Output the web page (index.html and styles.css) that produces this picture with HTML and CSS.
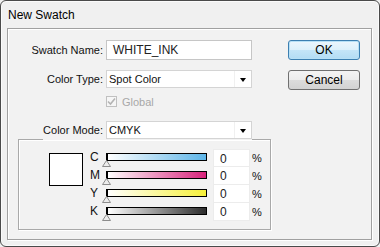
FILE: index.html
```html
<!DOCTYPE html>
<html lang="en">
<head>
    <meta charset="UTF-8">
    <title>New Swatch</title>
    <link rel="stylesheet" href="styles.css">
</head>
<body>
    <div class="window">
        <div class="titlebar">New Swatch</div>
        <div class="panel">
            <div class="form">
                <div class="row name-row">
                    <span class="label">Swatch Name:</span>
                    <div class="textbox">WHITE_INK</div>
                </div>
                <div class="row type-row">
                    <span class="label">Color Type:</span>
                    <div class="select">
                        <span class="select-text">Spot Color</span>
                        <span class="select-arrow"></span>
                    </div>
                </div>
                <div class="row check-row">
                    <span class="checkbox">
                        <svg width="9" height="9" viewBox="0 0 9 9"><path d="M1 4.5 L3.5 7 L8 1.5" fill="none" stroke="#b4b4b4" stroke-width="1.6"/></svg>
                    </span>
                    <span class="check-label">Global</span>
                </div>

                <div class="group">
                    <div class="group-title">
                        <span class="group-label">Color Mode:</span>
                        <div class="select">
                            <span class="select-text">CMYK</span>
                            <span class="select-arrow"></span>
                        </div>
                    </div>
                    <div class="group-body">
                        <div class="preview"></div>
                        <div class="sliders">
                            <div class="slider-row">
                                <span class="channel">C</span>
                                <div class="track">
                                    <div class="bar bar-c"></div>
                                    <svg class="thumb" width="9" height="7" viewBox="0 0 9 7"><path d="M4.5 0.5 L8.5 6.5 L0.5 6.5 Z" fill="#ececec" stroke="#8c8c8c"/></svg>
                                </div>
                                <div class="value">0</div>
                                <span class="pct">%</span>
                            </div>
                            <div class="slider-row">
                                <span class="channel">M</span>
                                <div class="track">
                                    <div class="bar bar-m"></div>
                                    <svg class="thumb" width="9" height="7" viewBox="0 0 9 7"><path d="M4.5 0.5 L8.5 6.5 L0.5 6.5 Z" fill="#ececec" stroke="#8c8c8c"/></svg>
                                </div>
                                <div class="value">0</div>
                                <span class="pct">%</span>
                            </div>
                            <div class="slider-row">
                                <span class="channel">Y</span>
                                <div class="track">
                                    <div class="bar bar-y"></div>
                                    <svg class="thumb" width="9" height="7" viewBox="0 0 9 7"><path d="M4.5 0.5 L8.5 6.5 L0.5 6.5 Z" fill="#ececec" stroke="#8c8c8c"/></svg>
                                </div>
                                <div class="value">0</div>
                                <span class="pct">%</span>
                            </div>
                            <div class="slider-row">
                                <span class="channel">K</span>
                                <div class="track">
                                    <div class="bar bar-k"></div>
                                    <svg class="thumb" width="9" height="7" viewBox="0 0 9 7"><path d="M4.5 0.5 L8.5 6.5 L0.5 6.5 Z" fill="#ececec" stroke="#8c8c8c"/></svg>
                                </div>
                                <div class="value">0</div>
                                <span class="pct">%</span>
                            </div>
                        </div>
                    </div>
                </div>
            </div>

            <div class="buttons">
                <div class="btn btn-default">OK</div>
                <div class="btn">Cancel</div>
            </div>
        </div>
    </div>
</body>
</html>
```

FILE: styles.css
```css
body {
    margin: 0;
    background: #f0f0f0;
    font-family: 'Liberation Sans', Arial, sans-serif;
    font-size: 11px;
    color: #111;
}

.window {
    width: 380px;
    height: 247px;
    box-sizing: border-box;
    border: 1px solid #4a4a4a;
    border-radius: 6px;
    background: #f0f0f0;
    box-shadow: inset 0 0 0 1px #fbfbfb;
    overflow: hidden;
}

.titlebar {
    height: 27px;
    line-height: 28px;
    padding-left: 7px;
    font-size: 12px;
    color: #000;
}

.panel {
    display: flex;
    height: 212px;
    box-sizing: border-box;
    margin: 0 7px 0 6px;
    border: 1px solid #a0a0a0;
    box-shadow: 1px 1px 0 #fff, inset 1px 1px 0 #fff;
    background: #f2f2f2;
}

.form {
    width: 264px;
}

.row {
    display: flex;
    align-items: center;
}

.label {
    width: 95px;
    margin-right: 3px;
    text-align: right;
}

.name-row {
    margin-top: 11px;
    height: 20px;
}

.textbox {
    width: 146px;
    height: 20px;
    box-sizing: border-box;
    border: 1px solid #c6c6c6;
    background: #fff;
    padding-left: 6px;
    font-size: 12px;
    line-height: 18px;
    color: #222;
}

.type-row {
    margin-top: 10px;
    height: 18px;
}

.select {
    display: flex;
    align-items: center;
    width: 146px;
    height: 18px;
    box-sizing: border-box;
    border: 1px solid #d4d4d4;
    background: #fff;
}

.select-text {
    flex: 1;
    padding-left: 2px;
    font-size: 11px;
    color: #111;
}

.select-arrow {
    display: flex;
    align-items: center;
    justify-content: center;
    width: 16px;
    height: 16px;
    border-left: 1px solid #f0f0f0;
}

.select-arrow::after {
    content: "";
    margin-top: 2px;
    border-top: 4px solid #000;
    border-left: 3.5px solid transparent;
    border-right: 3.5px solid transparent;
}

.check-row {
    margin-top: 8px;
    padding-left: 98px;
    height: 11px;
}

.checkbox {
    display: flex;
    align-items: center;
    justify-content: center;
    width: 11px;
    height: 11px;
    box-sizing: border-box;
    border: 1px solid #c0c0c0;
    background: #f6f6f6;
}

.check-label {
    margin-left: 5px;
    font-size: 11px;
    color: #a8a8a8;
}

.group {
    margin: 32px 0 0 10px;
    width: 253px;
    height: 91px;
    box-sizing: border-box;
    border: 1px solid #a9a9a9;
    box-shadow: 1px 1px 0 #fff, inset 1px 1px 0 #fff;
}

.group-title {
    display: flex;
    align-items: center;
    width: fit-content;
    margin: -19px 0 0 24px;
    padding-bottom: 1px;
    background: #f2f2f2;
}

.group-label {
    width: 60px;
    margin-right: 3px;
    text-align: right;
}

.group-body {
    display: flex;
}

.preview {
    width: 34px;
    height: 33px;
    box-sizing: border-box;
    margin: 13px 0 0 30px;
    border: 1px solid #000;
    background: #fff;
}

.sliders {
    margin: 9px 0 0 7px;
}

.slider-row {
    display: flex;
    height: 18px;
}

.channel {
    width: 16px;
    line-height: 17px;
    font-size: 12px;
}

.track {
    width: 101px;
    padding-top: 4px;
}

.bar {
    height: 8px;
    box-sizing: border-box;
    border: 1px solid #000;
    border-left-width: 2px;
}

.bar-c { background: linear-gradient(to right, #fff, #5db5e8); }
.bar-m { background: linear-gradient(to right, #fff, #d8237b); }
.bar-y { background: linear-gradient(to right, #fff, #f6f03a); }
.bar-k { background: linear-gradient(to right, #fff, #2c2c2c); }

.thumb {
    display: block;
    margin: -1px 0 0 -4px;
}

.value {
    width: 37px;
    height: 18px;
    box-sizing: border-box;
    margin-left: 6px;
    border: 1px solid #ececec;
    border-top: none;
    background: #fff;
    padding-left: 6px;
    font-size: 12px;
    line-height: 18px;
    color: #222;
}

.slider-row:first-child .value {
    border-top: 1px solid #ececec;
}

.pct {
    margin-left: 2px;
    line-height: 18px;
    font-size: 11px;
}

.buttons {
    display: flex;
    flex-direction: column;
    gap: 10px;
    width: 72px;
    margin: 11px 0 0 16px;
}

.btn {
    height: 20px;
    box-sizing: border-box;
    border: 1px solid #707070;
    border-radius: 3px;
    background: linear-gradient(#f4f4f4 0%, #ececec 50%, #dcdcdc 51%, #d2d2d2 100%);
    text-align: center;
    font-size: 12px;
    line-height: 18px;
    color: #000;
}

.btn-default {
    border-color: #3c7fb1;
    background: linear-gradient(#ecf6fd 0%, #dcf0fb 50%, #c4e5f8 51%, #b2dcf4 100%);
    box-shadow: inset 0 0 0 1px #b7e0f6;
}
```
